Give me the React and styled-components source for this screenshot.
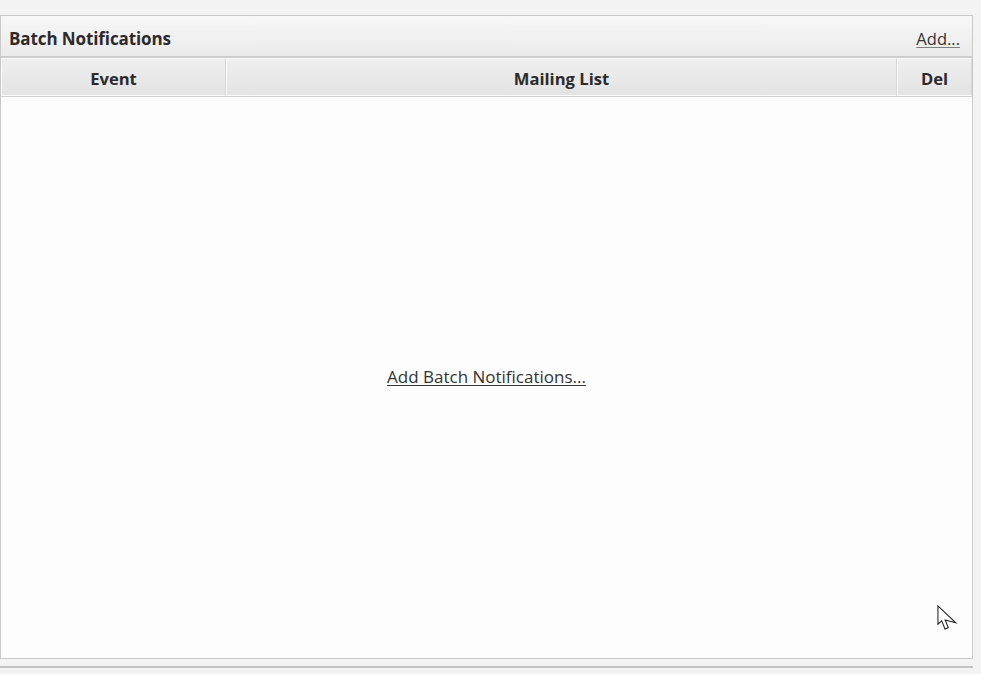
import React from 'react'
import styled, { createGlobalStyle } from 'styled-components'

const GlobalStyle = createGlobalStyle`
  html, body {
    margin: 0;
    padding: 0;
    background: #f3f3f3;
    font-family: "Open Sans", "Noto Sans", "DejaVu Sans", sans-serif;
    color: #2b2b2b;
  }
`

const Page = styled.div`
  position: relative;
  width: 981px;
  height: 674px;
  overflow: hidden;
  padding: 15px 8px 0 0;
  box-sizing: border-box;
`

const Panel = styled.div`
  display: flex;
  flex-direction: column;
  height: 644px;
  border: 1px solid #c9c9c9;
  background: #fdfdfd;
  box-sizing: border-box;
`

const PanelHeader = styled.div`
  display: flex;
  align-items: center;
  justify-content: space-between;
  height: 42px;
  padding: 5px 12px 0 8px;
  box-sizing: border-box;
  background: linear-gradient(#f7f7f7, #ebebeb);
  border-bottom: 2px solid #cdcdcd;
`

const Title = styled.div`
  font-weight: 700;
  font-size: 17px;
  letter-spacing: -0.1px;
`

const LinkText = styled.a`
  font-size: ${({ size }) => size || 17}px;
  color: #333;
  text-decoration: underline;
  text-decoration-color: ${({ line }) => line || '#333'};
  text-underline-offset: 2px;
  cursor: pointer;
`

const ColumnRow = styled.div`
  display: grid;
  grid-template-columns: 225px 671px 75px;
  height: 38px;
  border-bottom: 1px solid #d2d2d2;
`

const ColumnCell = styled.div`
  display: flex;
  align-items: center;
  justify-content: center;
  padding-top: 3px;
  font-weight: 700;
  font-size: 16.6px;
  background: linear-gradient(#efefef, #e3e3e3);
  border: 1px solid #fafafa;
  border-right-color: #d6d6d6;
  box-sizing: border-box;
`

const Body = styled.div`
  flex: 1;
  display: flex;
  align-items: center;
  justify-content: center;
  padding-bottom: 2px;
`

const NextPanel = styled.div`
  margin-top: 7px;
  height: 8px;
  border-top: 2px solid #c4c4c4;
  border-bottom: 1px solid #c9c9c9;
  background: #f3f3f3;
`

const Cursor = styled.svg`
  position: absolute;
  left: 936px;
  top: 604px;
`

const App = () => {
  return (
    <>
      <GlobalStyle />
      <Page>
        <Panel>
          <PanelHeader>
            <Title>Batch Notifications</Title>
            <LinkText size={16.5} line="#8a7a6a">Add...</LinkText>
          </PanelHeader>
          <ColumnRow>
            <ColumnCell>Event</ColumnCell>
            <ColumnCell>Mailing List</ColumnCell>
            <ColumnCell>Del</ColumnCell>
          </ColumnRow>
          <Body>
            <LinkText>Add Batch Notifications...</LinkText>
          </Body>
        </Panel>
        <NextPanel />
        <Cursor width="24" height="36" viewBox="0 0 16 24">
          <path
            d="M1.3 1.3 L1.3 13.5 L3.8 11.2 L6 16.7 L8.2 15.8 L6.1 10.7 L13.2 12.5 Z"
            fill="#fff"
            stroke="#222"
            strokeWidth="0.7"
            strokeLinejoin="miter"
          />
        </Cursor>
      </Page>
    </>
  )
}

export default App
